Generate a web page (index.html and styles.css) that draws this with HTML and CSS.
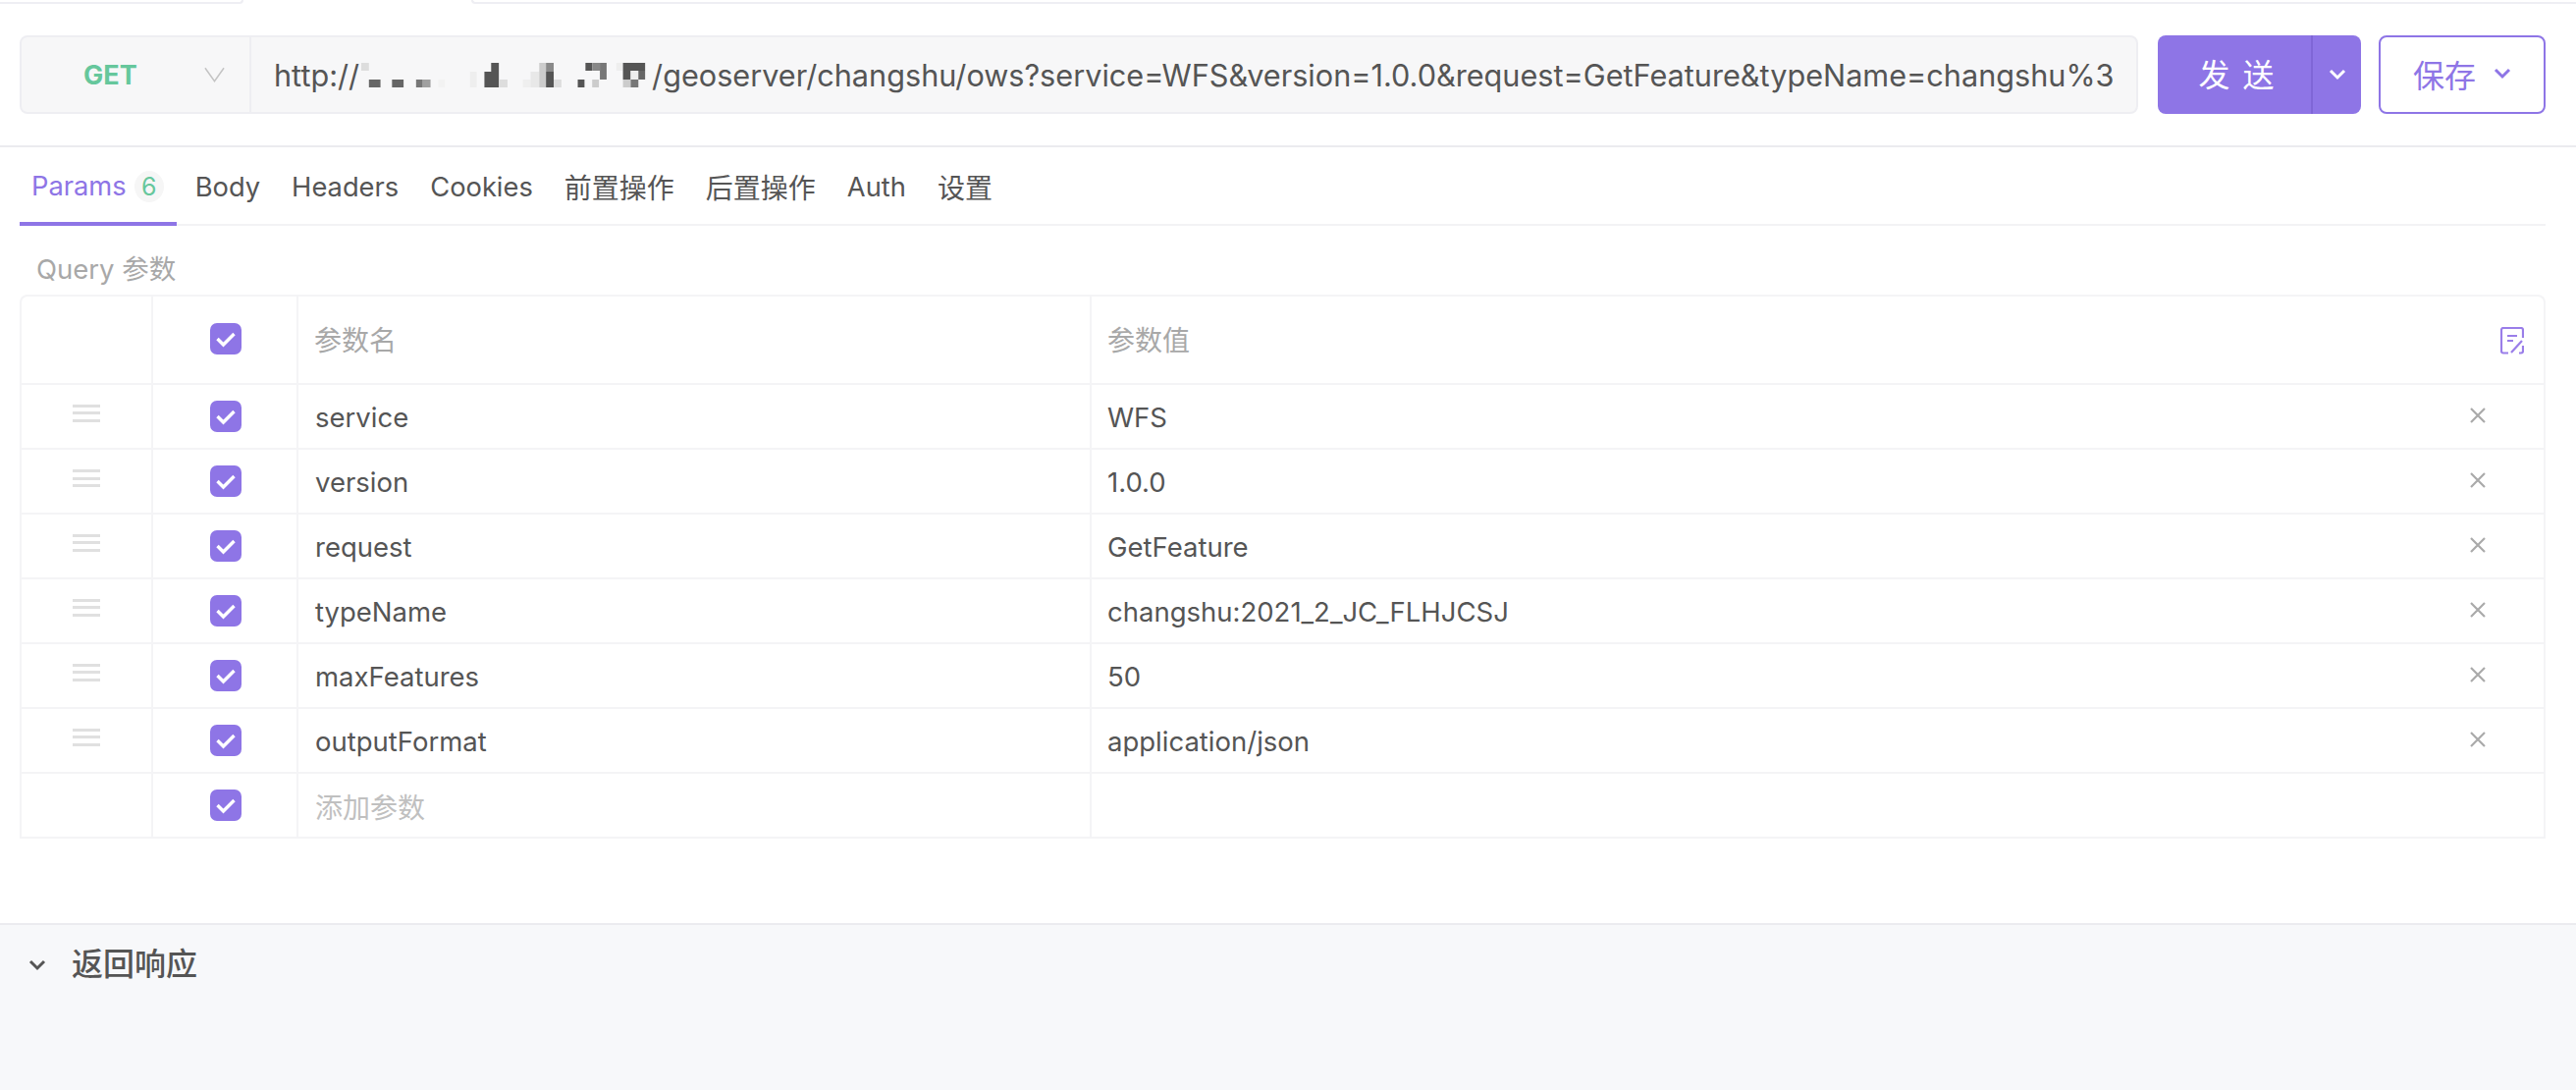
FILE: index.html
```html
<!DOCTYPE html>
<html lang="zh">
<head>
<meta charset="utf-8">
<title>GET</title>
<link rel="stylesheet" href="styles.css">
</head>
<body>
<div class="top-strip"><div class="strip-left"></div><div class="strip-right"></div></div>

<div class="request-bar">
  <div class="url-box">
    <div class="method"><span class="method-name">GET</span>
      <svg class="method-caret" width="21" height="16" viewBox="0 0 22 16"><path d="M1 1 L11 15 L21 1" fill="none" stroke="#c4c4c4" stroke-width="1.6"/></svg>
    </div>
    <div class="url"><span>http://</span><svg class="mosaic" width="298" height="30" viewBox="10 0 304 30" preserveAspectRatio="none">
      <rect x="12" y="3" width="8" height="8" fill="#ddd"/>
      <rect x="20" y="20" width="12" height="8" fill="#666"/>
      <rect x="44" y="20" width="12" height="8" fill="#666"/>
      <rect x="69" y="20" width="7" height="8" fill="#777"/>
      <rect x="76" y="20" width="8" height="8" fill="#a0a0a0"/>
      <rect x="92" y="20" width="7" height="8" fill="#f2f2f2"/>
      <rect x="125" y="12" width="7" height="16" fill="#eee"/>
      <rect x="140" y="12" width="15" height="16" fill="#555"/>
      <rect x="147" y="3" width="8" height="9" fill="#555"/>
      <rect x="155" y="20" width="9" height="8" fill="#ddd"/>
      <rect x="180" y="20" width="8" height="8" fill="#efefef"/>
      <rect x="188" y="12" width="9" height="16" fill="#e8e8e8"/>
      <rect x="197" y="3" width="7" height="25" fill="#ccc"/>
      <rect x="204" y="12" width="8" height="16" fill="#555"/>
      <rect x="204" y="3" width="8" height="9" fill="#8a8a8a"/>
      <rect x="212" y="20" width="8" height="8" fill="#ddd"/>
      <rect x="237" y="20" width="7" height="8" fill="#555"/>
      <rect x="245" y="3" width="7" height="8" fill="#555"/>
      <rect x="252" y="3" width="8" height="8" fill="#888"/>
      <rect x="260" y="3" width="7" height="17" fill="#777"/>
      <rect x="252" y="20" width="7" height="8" fill="#ccc"/>
      <rect x="277" y="3" width="7" height="8" fill="#eee"/>
      <rect x="284" y="3" width="23" height="8" fill="#555"/>
      <rect x="284" y="11" width="8" height="9" fill="#555"/>
      <rect x="292" y="11" width="8" height="9" fill="#eee"/>
      <rect x="300" y="11" width="7" height="9" fill="#666"/>
      <rect x="284" y="20" width="8" height="8" fill="#ccc"/>
      <rect x="292" y="20" width="8" height="8" fill="#777"/>
    </svg><span>/geoserver/changshu/ows?service=WFS&amp;version=1.0.0&amp;request=GetFeature&amp;typeName=changshu%3</span></div>
  </div>
  <div class="send-group">
    <button class="send-main">发 送</button>
    <button class="send-more"><svg width="18" height="12" viewBox="0 0 18 12"><path d="M2 2 L9 9 L16 2" fill="none" stroke="#fff" stroke-width="3"/></svg></button>
  </div>
  <button class="save">保存<svg width="18" height="12" viewBox="0 0 18 12"><path d="M2 2 L9 9 L16 2" fill="none" stroke="#8e75e6" stroke-width="3"/></svg></button>
</div>

<main class="editor">
  <nav class="tabs">
    <a class="tab active">Params<span class="count">6</span></a>
    <a class="tab">Body</a>
    <a class="tab">Headers</a>
    <a class="tab">Cookies</a>
    <a class="tab cjk">前置操作</a>
    <a class="tab cjk">后置操作</a>
    <a class="tab">Auth</a>
    <a class="tab cjk">设置</a>
  </nav>
  <div class="query-label">Query 参数</div>

  <div class="grid">
    <div class="row head">
      <div class="cell"></div>
      <div class="cell center"><span class="check"><svg width="32" height="32" viewBox="0 0 32 32"><path d="M7.5 16 L13.5 22 L24.5 11" fill="none" stroke="#fff" stroke-width="3.4"/></svg></span></div>
      <div class="cell name">参数名</div>
      <div class="cell value">参数值
        <svg class="note" width="24" height="28" viewBox="0 0 24 28"><path d="M8 26.5 H3 a2 2 0 0 1 -2 -2 V3 a2 2 0 0 1 2 -2 H21 a2 2 0 0 1 2 2 V11 M23 19 V24.5 a2 2 0 0 1 -2 2 H19 M7 9 H17 M7 14 H13 M11 26 L22 14" fill="none" stroke="#9a7ee9" stroke-width="2.2"/></svg>
      </div>
    </div>

    <div class="row">
      <div class="cell center"><span class="handle"></span></div>
      <div class="cell center"><span class="check"><svg width="32" height="32" viewBox="0 0 32 32"><path d="M7.5 16 L13.5 22 L24.5 11" fill="none" stroke="#fff" stroke-width="3.4"/></svg></span></div>
      <div class="cell name">service</div>
      <div class="cell value">WFS<svg class="close" width="18" height="18" viewBox="0 0 18 18"><path d="M2 2 L16 16 M16 2 L2 16" stroke="#aaa" stroke-width="2.2"/></svg></div>
    </div>
    <div class="row">
      <div class="cell center"><span class="handle"></span></div>
      <div class="cell center"><span class="check"><svg width="32" height="32" viewBox="0 0 32 32"><path d="M7.5 16 L13.5 22 L24.5 11" fill="none" stroke="#fff" stroke-width="3.4"/></svg></span></div>
      <div class="cell name">version</div>
      <div class="cell value">1.0.0<svg class="close" width="18" height="18" viewBox="0 0 18 18"><path d="M2 2 L16 16 M16 2 L2 16" stroke="#aaa" stroke-width="2.2"/></svg></div>
    </div>
    <div class="row">
      <div class="cell center"><span class="handle"></span></div>
      <div class="cell center"><span class="check"><svg width="32" height="32" viewBox="0 0 32 32"><path d="M7.5 16 L13.5 22 L24.5 11" fill="none" stroke="#fff" stroke-width="3.4"/></svg></span></div>
      <div class="cell name">request</div>
      <div class="cell value">GetFeature<svg class="close" width="18" height="18" viewBox="0 0 18 18"><path d="M2 2 L16 16 M16 2 L2 16" stroke="#aaa" stroke-width="2.2"/></svg></div>
    </div>
    <div class="row">
      <div class="cell center"><span class="handle"></span></div>
      <div class="cell center"><span class="check"><svg width="32" height="32" viewBox="0 0 32 32"><path d="M7.5 16 L13.5 22 L24.5 11" fill="none" stroke="#fff" stroke-width="3.4"/></svg></span></div>
      <div class="cell name">typeName</div>
      <div class="cell value">changshu:2021_2_JC_FLHJCSJ<svg class="close" width="18" height="18" viewBox="0 0 18 18"><path d="M2 2 L16 16 M16 2 L2 16" stroke="#aaa" stroke-width="2.2"/></svg></div>
    </div>
    <div class="row">
      <div class="cell center"><span class="handle"></span></div>
      <div class="cell center"><span class="check"><svg width="32" height="32" viewBox="0 0 32 32"><path d="M7.5 16 L13.5 22 L24.5 11" fill="none" stroke="#fff" stroke-width="3.4"/></svg></span></div>
      <div class="cell name">maxFeatures</div>
      <div class="cell value">50<svg class="close" width="18" height="18" viewBox="0 0 18 18"><path d="M2 2 L16 16 M16 2 L2 16" stroke="#aaa" stroke-width="2.2"/></svg></div>
    </div>
    <div class="row">
      <div class="cell center"><span class="handle"></span></div>
      <div class="cell center"><span class="check"><svg width="32" height="32" viewBox="0 0 32 32"><path d="M7.5 16 L13.5 22 L24.5 11" fill="none" stroke="#fff" stroke-width="3.4"/></svg></span></div>
      <div class="cell name">outputFormat</div>
      <div class="cell value">application/json<svg class="close" width="18" height="18" viewBox="0 0 18 18"><path d="M2 2 L16 16 M16 2 L2 16" stroke="#aaa" stroke-width="2.2"/></svg></div>
    </div>
    <div class="row">
      <div class="cell"></div>
      <div class="cell center"><span class="check"><svg width="32" height="32" viewBox="0 0 32 32"><path d="M7.5 16 L13.5 22 L24.5 11" fill="none" stroke="#fff" stroke-width="3.4"/></svg></span></div>
      <div class="cell name placeholder">添加参数</div>
      <div class="cell value"></div>
    </div>
  </div>
</main>

<section class="response">
  <svg width="18" height="12" viewBox="0 0 18 12"><path d="M2 2 L9 9 L16 2" fill="none" stroke="#555" stroke-width="3"/></svg>
  <h2 class="response-title">返回响应</h2>
</section>
</body>
</html>
```

FILE: styles.css
```css
* { box-sizing: border-box; }
html, body { height: 100%; }
body {
  margin: 0;
  display: flex;
  flex-direction: column;
  height: 1110px;
  overflow: hidden;
  background: #fff;
  color: #555;
  font-family: Inter, "Noto Sans CJK SC", sans-serif;
  font-size: 27.5px;
}
.top-strip { display: flex; justify-content: space-between; height: 4px; flex: none; }
.strip-left {
  width: 248px;
  border-bottom: 2px solid #eeeef3;
  border-right: 2px solid #eeeef3;
  border-bottom-right-radius: 4px;
}
.strip-right {
  width: 2144px;
  border-bottom: 2px solid #eeeef3;
  border-left: 2px solid #eeeef3;
  border-bottom-left-radius: 4px;
}
.request-bar {
  flex: none;
  display: flex;
  height: 146px;
  padding: 32px 31px 32px 20px;
  border-bottom: 2px solid #ebebef;
}
.url-box {
  width: 2158px;
  height: 80px;
  display: flex;
  background: #f7f7f8;
  border: 2px solid #eeeef2;
  border-radius: 8px;
}
.method {
  width: 234px;
  flex: none;
  display: flex;
  align-items: center;
  border-right: 2px solid #eeeef2;
}
.method-name { margin-left: 63px; font-size: 27px; font-weight: 700; color: #66c79c; }
.method-caret { margin-left: 68px; }
.url {
  flex: 1;
  display: flex;
  align-items: center;
  padding-left: 23px;
  font-size: 30.65px;
  color: #555;
  white-space: nowrap;
  overflow: hidden;
}
.mosaic { flex: none; }
.send-group {
  margin-left: 20px;
  width: 207px;
  height: 80px;
  display: flex;
  background: #8e75e6;
  border-radius: 8px;
}
.send-main, .send-more, .save {
  border: 0;
  background: none;
  padding: 0;
  font-family: inherit;
}
.send-main {
  width: 158px;
  padding: 0 0 4px 6px;
  color: #fff;
  font-size: 32px;
  letter-spacing: 2px;
  border-right: 2px solid #7f66d6;
}
.send-more { flex: 1; display: flex; align-items: center; justify-content: center; }
.save {
  margin-left: 18px;
  width: 170px;
  height: 80px;
  padding-bottom: 3px;
  border: 2px solid #8e75e6;
  border-radius: 8px;
  color: #8e75e6;
  font-size: 32px;
  display: flex;
  align-items: center;
  justify-content: center;
  gap: 18px;
}
.editor { flex: none; height: 790px; padding: 0 31px 0 20px; }
.tabs {
  display: flex;
  height: 80px;
  border-bottom: 2px solid #f3f3f5;
}
.tab {
  height: 80px;
  padding: 0 13px 0 12px;
  margin-right: 7px;
  display: flex;
  align-items: center;
  color: #555;
  font-size: 27.3px;
}
.tab.cjk { font-size: 28px; }
.tab.active {
  color: #8e75e6;
  border-bottom: 4px solid #8e75e6;
  padding-top: 3px;
}
.count {
  width: 30px;
  height: 32px;
  margin-left: 8px;
  border-radius: 50%;
  background: #f6f6f6;
  color: #66c79c;
  font-size: 25px;
  display: flex;
  align-items: center;
  justify-content: center;
}
.query-label {
  height: 70px;
  padding: 13px 17px 0;
  display: flex;
  align-items: center;
  color: #a8a8a8;
  font-size: 27.5px;
}
.grid {
  border: 2px solid #f4f4f6;
  border-bottom: 0;
  border-radius: 8px 8px 0 0;
  width: 2573px;
}
.row {
  display: grid;
  grid-template-columns: 134px 148px 808px 1fr;
  height: 66px;
  border-bottom: 2px solid #f4f4f6;
}
.row.head { height: 90px; }
.cell {
  display: flex;
  align-items: center;
  border-right: 2px solid #f4f4f6;
  padding-top: 2px;
}
.head .cell { padding-top: 0; padding-bottom: 2px; }
.cell:last-child { border-right: 0; }
.center { justify-content: center; padding-top: 0; }
.name { padding-left: 17px; }
.value { padding-left: 16px; position: relative; }
.head .name, .head .value { color: #a8a8a8; padding-left: 16px; font-size: 28px; }
.placeholder { color: #c0c0c0; font-size: 28px; }
.check {
  width: 32px;
  height: 32px;
  margin-left: 2px;
  border-radius: 7px;
  background: #8e75e6;
  display: block;
}
.check svg { display: block; }
.handle {
  width: 28px;
  height: 18px;
  margin-top: -6px;
  display: block;
  background: linear-gradient(#e0e0e0 0 3px, transparent 3px 7.5px, #e0e0e0 7.5px 10.5px, transparent 10.5px 15px, #e0e0e0 15px 18px);
}
.close { position: absolute; right: 58px; top: 22px; }
.note { position: absolute; right: 20px; top: 31px; }
.response {
  flex: 1;
  border-top: 2px solid #ebebef;
  background: #f7f8fa;
  display: flex;
  align-items: flex-start;
  padding: 33px 0 0 29px;
}
.response svg { margin-top: 2px; }
.response-title {
  margin: -15px 0 0 26px;
  font-size: 32px;
  line-height: 44px;
  font-weight: 500;
  color: #555;
}
```
